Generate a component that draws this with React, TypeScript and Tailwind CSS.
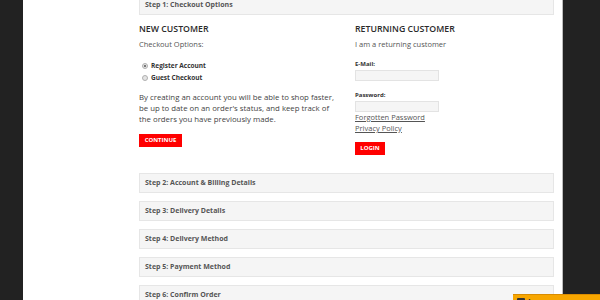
import React from "react";

const font = { fontFamily: '"Open Sans", "Liberation Sans", sans-serif' };

function StepHeading({ title, className = "" }: { title: string; className?: string }) {
  return (
    <div
      className={
        "h-[20px] flex items-center pl-[5px] bg-[#f5f5f5] border border-[#e6e6e6] text-[7px] font-bold text-[#555] " +
        className
      }
    >
      {title}
    </div>
  );
}

function Radio({ checked, label }: { checked?: boolean; label: string }) {
  return (
    <div className="flex items-center h-[12px]">
      <span className="ml-[3px] mr-[3px] w-[6px] h-[6px] rounded-full border border-[#b0b0b0] bg-[#e4e4e4] flex items-center justify-center">
        {checked && <span className="w-[2px] h-[2px] rounded-full bg-[#555]" />}
      </span>
      <span className="text-[6.5px] font-bold text-[#333]">{label}</span>
    </div>
  );
}

export default function App() {
  return (
    <div className="relative w-[600px] h-[300px] overflow-hidden flex bg-[#222222]" style={font}>
      <div className="w-[23px] shrink-0 bg-[#222222]" />
      <div className="w-[540px] shrink-0 bg-white border-r border-[#bdbdbd] pl-[116px] pr-[8px]">
        <StepHeading title="Step 1: Checkout Options" className="-mt-[5px]" />
        <div className="grid grid-cols-[216px_1fr] mt-[8px]">
          <div className="text-[#333]">
            <div className="text-[8.75px] font-semibold leading-[12px] text-[#2a2a2a]">NEW CUSTOMER</div>
            <div className="text-[7.5px] leading-[11px] mt-[4px] text-[#555]">Checkout Options:</div>
            <div className="mt-[10px]">
              <Radio checked label="Register Account" />
              <Radio label="Guest Checkout" />
            </div>
            <p className="text-[7.8px] leading-[11px] mt-[8px] text-[#444] w-[196px]">
              By creating an account you will be able to shop faster, be up to date on an order's status, and keep track of
              the orders you have previously made.
            </p>
            <button className="mt-[9px] h-[13px] w-[43px] bg-[#ff0000] text-white text-[6px] font-bold flex items-center justify-center">
              CONTINUE
            </button>
          </div>
          <div className="text-[#333]">
            <div className="text-[8.75px] font-semibold leading-[12px] text-[#2a2a2a]">RETURNING CUSTOMER</div>
            <div className="text-[7.5px] leading-[11px] mt-[4px] text-[#555]">I am a returning customer</div>
            <div className="mt-[10px] text-[6px] font-bold text-[#333] leading-[8px]">E-Mail:</div>
            <div className="mt-[2px] w-[84px] h-[11px] bg-[#f5f5f5] border border-[#e3e3e3]" />
            <div className="mt-[10px] text-[6px] font-bold text-[#333] leading-[8px]">Password:</div>
            <div className="mt-[2px] w-[84px] h-[11px] bg-[#f5f5f5] border border-[#e3e3e3]" />
            <div className="text-[7.5px] leading-[11px] text-[#555] underline">Forgotten Password</div>
            <div className="text-[7.5px] leading-[11px] text-[#555] underline">Privacy Policy</div>
            <button className="mt-[8px] h-[13px] w-[30px] bg-[#ff0000] text-white text-[6px] font-bold flex items-center justify-center">
              LOGIN
            </button>
          </div>
        </div>
        <div className="mt-[18px] flex flex-col gap-[8px]">
          <StepHeading title="Step 2: Account & Billing Details" />
          <StepHeading title="Step 3: Delivery Details" />
          <StepHeading title="Step 4: Delivery Method" />
          <StepHeading title="Step 5: Payment Method" />
          <StepHeading title="Step 6: Confirm Order" />
        </div>
      </div>
      <div className="flex-1 bg-[#222222]" />
      <div className="absolute left-[513px] top-[294px] w-[100px] h-[20px] bg-[#f7a600] border-t border-[#d98c00] flex items-start pl-[4px] pt-[3px] gap-[3px]">
        <span className="w-[8px] h-[6px] bg-[#333] rounded-[1px]" />
        <span className="text-[8px] font-bold text-[#333] leading-[8px]">Leave a message</span>
      </div>
    </div>
  );
}
